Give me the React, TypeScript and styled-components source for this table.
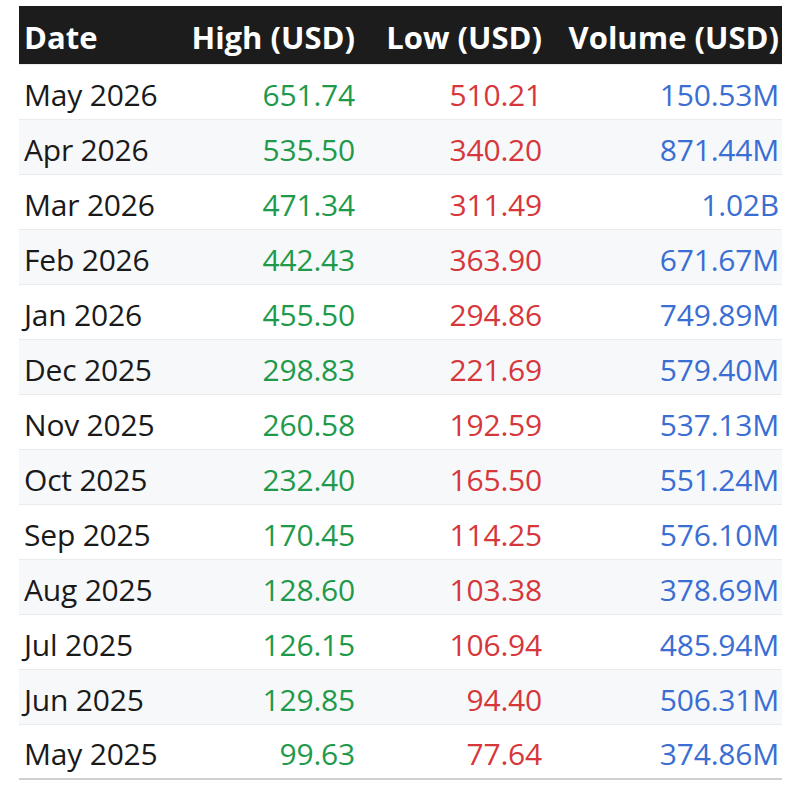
import styled, { createGlobalStyle } from 'styled-components';

const rows: Row[] = [
  { date: 'May 2026', high: '651.74', low: '510.21', volume: '150.53M' },
  { date: 'Apr 2026', high: '535.50', low: '340.20', volume: '871.44M' },
  { date: 'Mar 2026', high: '471.34', low: '311.49', volume: '1.02B' },
  { date: 'Feb 2026', high: '442.43', low: '363.90', volume: '671.67M' },
  { date: 'Jan 2026', high: '455.50', low: '294.86', volume: '749.89M' },
  { date: 'Dec 2025', high: '298.83', low: '221.69', volume: '579.40M' },
  { date: 'Nov 2025', high: '260.58', low: '192.59', volume: '537.13M' },
  { date: 'Oct 2025', high: '232.40', low: '165.50', volume: '551.24M' },
  { date: 'Sep 2025', high: '170.45', low: '114.25', volume: '576.10M' },
  { date: 'Aug 2025', high: '128.60', low: '103.38', volume: '378.69M' },
  { date: 'Jul 2025', high: '126.15', low: '106.94', volume: '485.94M' },
  { date: 'Jun 2025', high: '129.85', low: '94.40', volume: '506.31M' },
  { date: 'May 2025', high: '99.63', low: '77.64', volume: '374.86M' },
];

interface Row {
  date: string;
  high: string;
  low: string;
  volume: string;
}

const App = (): JSX.Element => {
  return (
    <>
      <GlobalStyle />
      <Table>
        <colgroup>
          <col style={{ width: 151 }} />
          <col style={{ width: 188 }} />
          <col style={{ width: 187 }} />
          <col style={{ width: 237 }} />
        </colgroup>
        <thead>
          <tr>
            <HeadCell>Date</HeadCell>
            <HeadCell $right>High (USD)</HeadCell>
            <HeadCell $right>Low (USD)</HeadCell>
            <HeadCell $right>Volume (USD)</HeadCell>
          </tr>
        </thead>
        <tbody>
          {rows.map((row) => (
            <BodyRow key={row.date}>
              <Cell>{row.date}</Cell>
              <Cell $right $tone="#1f9a4b">
                {row.high}
              </Cell>
              <Cell $right $tone="#d6373b">
                {row.low}
              </Cell>
              <Cell $right $tone="#3a6ed3">
                {row.volume}
              </Cell>
            </BodyRow>
          ))}
        </tbody>
      </Table>
    </>
  );
};

const GlobalStyle = createGlobalStyle`
  body {
    margin: 0;
    background: #ffffff;
    font-family: 'Open Sans', 'Noto Sans', sans-serif;
  }
`;

const Table = styled.table`
  margin: 6px 0 0 19px;
  width: 763px;
  table-layout: fixed;
  border-collapse: collapse;
  border-bottom: 2px solid #d0d0d0;
`;

const HeadCell = styled.th<{ $right?: boolean }>`
  box-sizing: border-box;
  background: #1c1c1c;
  color: #ffffff;
  height: 58px;
  padding: 5px 3px 0 5px;
  font-size: 31px;
  font-weight: 700;
  line-height: 1;
  text-align: ${(p) => (p.$right ? 'right' : 'left')};
  white-space: nowrap;
  letter-spacing: 0;
`;

const BodyRow = styled.tr`
  background: #ffffff;
  border-top: 1px solid #e9ecef;
  &:nth-child(even) {
    background: #f7f8fa;
  }
`;

const Cell = styled.td<{ $right?: boolean; $tone?: string }>`
  box-sizing: border-box;
  height: 55px;
  padding: 6px 3px 0 5px;
  font-size: 30px;
  line-height: 1;
  color: ${(p) => p.$tone ?? '#1a1a1a'};
  text-align: ${(p) => (p.$right ? 'right' : 'left')};
  white-space: nowrap;
  letter-spacing: -0.2px;
`;

export default App;
